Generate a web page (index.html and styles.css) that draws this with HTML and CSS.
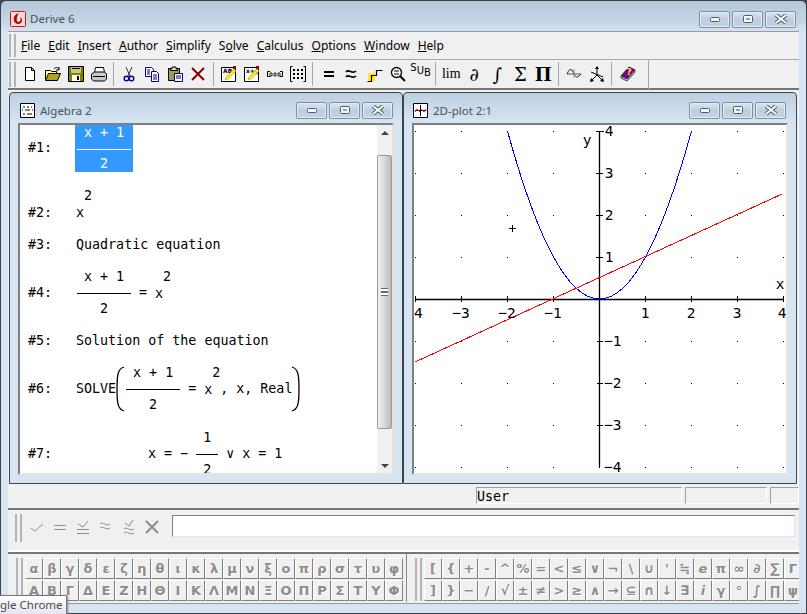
FILE: index.html
```html
<!doctype html>
<html lang="en">
<head>
<meta charset="utf-8">
<title>Derive 6</title>
<link rel="stylesheet" href="styles.css">
</head>
<body>

<svg class="sprites" width="0" height="0">
	<symbol id="capMin" viewBox="0 0 12 8"><rect x="1.5" y="2.5" width="9" height="4" rx="1" fill="#f4f7fa" stroke="#4e5d6e"/></symbol>
	<symbol id="capMax" viewBox="0 0 12 8"><rect x="1.5" y="0.5" width="9" height="7" rx="1" fill="#f4f7fa" stroke="#4e5d6e"/><rect x="4" y="3" width="4" height="2" fill="#8ea2b6"/></symbol>
	<symbol id="capClose" viewBox="0 0 14 10"><path d="M2 1l10 8M12 1L2 9" stroke="#4e5d6e" stroke-width="4"/><path d="M2 1l10 8M12 1L2 9" stroke="#fff" stroke-width="2"/></symbol>
</svg>

<div class="frame">

	<div class="titlebar">
		<svg class="appicon" width="16" height="16" viewBox="0 0 16 16"><rect x="0.5" y="0.5" width="15" height="15" rx="1" fill="#f4dcdc" stroke="#e01010"/><path d="M9 2c-4 1-6 4-5 8 1 3 5 4 7 2 2-2 1-5-1-6 1 2 1 4-1 5-2 0-3-2-2-4 0-2 1-4 2-5z" fill="#a80c0c"/></svg>
		<span class="titletext">Derive 6</span>
		<div class="caps">
			<span class="cap"><svg width="12" height="8"><use href="#capMin"/></svg></span>
			<span class="cap"><svg width="12" height="8"><use href="#capMax"/></svg></span>
			<span class="cap"><svg width="14" height="10"><use href="#capClose"/></svg></span>
		</div>
	</div>

	<div class="client">

		<div class="menubar">
			<i class="grip"></i>
			<span><u>F</u>ile</span>
			<span><u>E</u>dit</span>
			<span><u>I</u>nsert</span>
			<span><u>A</u>uthor</span>
			<span><u>S</u>implify</span>
			<span>S<u>o</u>lve</span>
			<span><u>C</u>alculus</span>
			<span><u>O</u>ptions</span>
			<span><u>W</u>indow</span>
			<span><u>H</u>elp</span>
		</div>

		<div class="toolbar">
			<i class="grip"></i>
			<span class="tool"><svg width="16" height="16"><path d="M3.5 1.5h6l3 3v10h-9zM9.5 1.5v3h3" fill="#fff" stroke="#000"/></svg></span>
			<span class="tool"><svg width="16" height="16"><path d="M.5 13.5v-9h5l1 1h5v2" fill="#ffff9c" stroke="#000"/><path d="M.5 14.5l3-7h12l-3 7z" fill="#b8a020" stroke="#000"/><path d="M9 3c1-2 4-2 5 0M14 1v3h-3" fill="none" stroke="#000"/></svg></span>
			<span class="tool"><svg width="16" height="16"><path d="M.5.5h15v15H.5z" fill="#808000" stroke="#000"/><rect x="3" y="1" width="10" height="6" fill="#c8c880"/><rect x="4" y="2" width="8" height="1" fill="#000"/><rect x="4" y="9" width="8" height="6" fill="#fff"/><rect x="9" y="10" width="2" height="4" fill="#000"/></svg></span>
			<span class="tool"><svg width="16" height="16"><path d="M4.5 1.5h8l1 5h-10z" fill="#fff" stroke="#000"/><path d="M.5 8l3-2h10l2 2v5l-2 2H2.5L.5 13z" fill="#c8c8c8" stroke="#000"/><path d="M2 10.500h12" stroke="#000"/><rect x="10" y="8" width="3" height="1" fill="#ff0"/></svg></span>
			<i class="sep"></i>
			<span class="tool"><svg width="16" height="16"><path d="M5 1l4 9M11 1L7 10" stroke="#333" fill="none"/><circle cx="5.500" cy="12.500" r="2.300" fill="none" stroke="#0000a0" stroke-width="1.400"/><circle cx="10.500" cy="12.500" r="2.300" fill="none" stroke="#0000a0" stroke-width="1.400"/></svg></span>
			<span class="tool"><svg width="16" height="16"><path d="M1.500 1.500h6l2 2v7h-8z" fill="#fff" stroke="#000080"/><path d="M7.500 5.500h5l2 2v8h-7z" fill="#fff" stroke="#000080"/><path d="M3 4h3M3 6h3M3 8h3M9 9h4M9 11h4M9 13h4" stroke="#000080"/></svg></span>
			<span class="tool"><svg width="16" height="16"><path d="M1.500 2.500h11v12h-11z" fill="#a09858" stroke="#000"/><path d="M5 2.500V1h4v1.500l1.500 1v1h-7v-1z" fill="#e0d890" stroke="#000"/><path d="M7.500 7.500h8v8h-8z" fill="#fff" stroke="#000080"/><path d="M9 10h5M9 12h5" stroke="#000080"/></svg></span>
			<span class="tool"><svg width="16" height="16"><path d="M2 2l12 12M14 2L2 14" stroke="#800000" stroke-width="2"/></svg></span>
			<i class="sep"></i>
			<span class="tool"><svg width="16" height="16"><path d="M.5 1.500h14v14H.5z" fill="#fff" stroke="#000"/><text class="icontext" x="2" y="7">AB</text><path d="M4 14l1-3 8-8 2 2-8 8z" fill="#ffe820" stroke="#a09000" stroke-width=".5"/><rect x="12" y="0" width="3" height="3" fill="#a00020"/></svg></span>
			<span class="tool"><svg width="16" height="16"><path d="M.5 1.500h14v14H.5z" fill="#fff" stroke="#000"/><text class="icontext" x="2" y="7">x+y</text><path d="M4 14l1-3 8-8 2 2-8 8z" fill="#ffe820" stroke="#a09000" stroke-width=".5"/><rect x="12" y="0" width="3" height="3" fill="#a00020"/></svg></span>
			<span class="tool"><svg width="16" height="16"><path d="M3 5.500H.5v5H3M13 5.500h2.500v5H13" fill="none" stroke="#000"/><path d="M3 7h2v3H3zM7 7h2v3H7zM11 7h2v3h-2z" fill="none" stroke="#000" stroke-width=".8"/></svg></span>
			<span class="tool"><svg width="16" height="16"><path d="M2.500.5H.5v15h2M13.500.5h2v15h-2" fill="none" stroke="#000"/><path d="M3 3h2v2H3zM7 3h2v2H7zM11 3h2v2h-2zM3 7h2v2H3zM7 7h2v2H7zM11 7h2v2h-2zM3 11h2v2H3zM7 11h2v2H7zM11 11h2v2h-2z"/></svg></span>
			<i class="sep"></i>
			<span class="tool"><svg width="16" height="16"><path d="M3 5h10v2H3zM3 9h10v2H3z"/></svg></span>
			<span class="tool"><svg width="16" height="16"><path d="M2 6c3-4 6 3 10-1M2 11c3-4 6 3 10-1" fill="none" stroke="#000" stroke-width="1.600"/></svg></span>
			<span class="tool"><svg width="16" height="16"><rect x="1" y="7" width="7" height="8" fill="#ffe820"/><path d="M.5 15.500h4v-6h5v-5h6" fill="none" stroke="#000" stroke-width="1.200"/></svg></span>
			<span class="tool"><svg width="16" height="16"><circle cx="6.500" cy="6.500" r="5" fill="#fff" stroke="#000" stroke-width="1.300"/><path d="M4 5h5M4 8h5" stroke="#000"/><path d="M10 10l5 5" stroke="#000" stroke-width="2"/></svg></span>
			<span class="tool tool-sub"><span>S</span><span>U</span><span>B</span></span>
			<i class="sep"></i>
			<span class="tool tool-lim">lim</span>
			<span class="tool tool-op">∂</span>
			<span class="tool tool-op">∫</span>
			<span class="tool tool-op">Σ</span>
			<span class="tool tool-op tool-heavy">Π</span>
			<i class="sep"></i>
			<span class="tool"><svg width="16" height="16"><path d="M1 8h14" stroke="#555"/><path d="M1 8c3-7 5-5 7 0s4 3 7 0" fill="none" stroke="#222"/><path d="M8 3v9" stroke="#999"/></svg></span>
			<span class="tool"><svg width="16" height="16"><path d="M8 1v8M8 9l-6 6M8 9l6 6M2 6l12 5" stroke="#000" fill="none"/><path d="M8 0l-2 3h4zM1 16l1-4 3 3zM15 16l-1-4-3 3z"/></svg></span>
			<i class="sep"></i>
			<span class="tool"><svg width="16" height="16"><path d="M1 10L9 1l6 3-8 9z" fill="#800090" stroke="#300040"/><path d="M1 10v2l6 3 8-9V4l-8 9z" fill="#c8c8c8" stroke="#444"/><text class="iconq" x="6.500" y="9">?</text></svg></span>
			<i class="sep sep-end"></i>
		</div>

		<div class="mdi">

			<section class="child">
				<div class="childtitle">
					<svg class="childicon" width="15" height="15"><path d="M.5.5h14v14H.5z" fill="#fff" stroke="#000"/><path d="M3 4h2M7 4h2M11 4h1M2 7h1M5 7h5M12 7h1M3 11h2M7 11h5" stroke="#000"/></svg>
					<span class="titletext">Algebra 2</span>
					<div class="caps">
						<span class="cap"><svg width="12" height="8"><use href="#capMin"/></svg></span>
						<span class="cap"><svg width="12" height="8"><use href="#capMax"/></svg></span>
						<span class="cap"><svg width="14" height="10"><use href="#capClose"/></svg></span>
					</div>
				</div>
				<div class="pane pane-algebra">
					<div class="sheet">
						<div class="row row-first"><span class="num">#1:</span><span class="frac frac-sel"><span>x + 1</span><i></i><span>2</span></span></div>
						<div class="row row-pow"><span class="num">#2:</span><span class="pow"><span class="sup">2</span><span>x</span></span></div>
						<div class="row"><span class="num">#3:</span><span>Quadratic equation</span></div>
						<div class="row"><span class="num">#4:</span><span class="frac"><span>x + 1</span><i></i><span>2</span></span><span> = </span><span class="pow pow-mid"><span class="sup">2</span><span>x</span></span></div>
						<div class="row"><span class="num">#5:</span><span>Solution of the equation</span></div>
						<div class="row"><span class="num">#6:</span><span>SOLVE</span><svg class="paren" width="9" height="46" viewBox="0 0 9 46"><path d="M8 1C2 3 1 8 1 23s1 20 7 22" fill="none" stroke="#000" stroke-width="1.300"/></svg><span class="frac"><span>x + 1</span><i></i><span>2</span></span><span> = </span><span class="pow pow-mid"><span class="sup">2</span><span>x</span></span><span>, x, Real</span><svg class="paren paren-r" width="9" height="46" viewBox="0 0 9 46"><path d="M1 1c6 2 7 7 7 22s-1 20-7 22" fill="none" stroke="#000" stroke-width="1.300"/></svg></div>
						<div class="row row-last"><span class="num">#7:</span><span class="indent">x = − </span><span class="frac frac-small"><span>1</span><i></i><span>2</span></span><span> ∨ x = 1</span></div>
					</div>
					<div class="scrollbar">
						<span class="arrow-up"></span>
						<div class="thumb"><i></i></div>
						<span class="arrow-down"></span>
					</div>
				</div>
			</section>

			<section class="child child-plot">
				<div class="childtitle">
					<svg class="childicon" width="15" height="15"><path d="M.5.5h14v14H.5z" fill="#fff" stroke="#000"/><path d="M7.500 2v11M2 7.500h11" stroke="#000"/><path d="M2 9l2-3 3 3M8 6l3 3 2-3" fill="none" stroke="#e02020"/></svg>
					<span class="titletext">2D-plot 2:1</span>
					<div class="caps">
						<span class="cap"><svg width="12" height="8"><use href="#capMin"/></svg></span>
						<span class="cap"><svg width="12" height="8"><use href="#capMax"/></svg></span>
						<span class="cap"><svg width="14" height="10"><use href="#capClose"/></svg></span>
					</div>
				</div>
				<div class="pane">
					<svg class="plot" width="372" height="349" viewBox="414 125 372 349">
						<path class="dots" d="M415 131.500H785M415 173.500H785M415 215.500H785M415 257.500H785M415 341.500H785M415 383.500H785M415 425.500H785M415 467.500H785"/>
						<path class="axis axis-main" d="M415 299.500H784M599.500 131V467"/>
						<path class="axis" d="M415.500 296v6M461.500 296v6M507.500 296v6M553.500 296v6M645.500 296v6M691.500 296v6M737.500 296v6M783.500 296v6M596 131.500h8M596 173.500h7M596 215.500h7M596 257.500h7M597 341.500h6M597 383.500h6M597 425.500h6"/>
						<path class="curve-blue" d="M507.500 131Q599.500 467 691.500 131"/>
						<path class="curve-red" d="M415 362L782 194"/>
						<path class="axis" d="M509 228.500h7M512.500 225v7"/>
						<g class="ticks">
							<text x="609" y="136" text-anchor="middle">4</text>
							<text x="609" y="178" text-anchor="middle">3</text>
							<text x="609" y="220" text-anchor="middle">2</text>
							<text x="609" y="262" text-anchor="middle">1</text>
							<text x="604" y="346">−1</text>
							<text x="604" y="388">−2</text>
							<text x="604" y="430">−3</text>
							<text x="604" y="472">−4</text>
							<text x="414" y="318" text-anchor="middle">−4</text>
							<text x="461" y="318" text-anchor="middle">−3</text>
							<text x="507" y="318" text-anchor="middle">−2</text>
							<text x="553" y="318" text-anchor="middle">−1</text>
							<text x="645" y="318" text-anchor="middle">1</text>
							<text x="691" y="318" text-anchor="middle">2</text>
							<text x="737" y="318" text-anchor="middle">3</text>
							<text x="782" y="318" text-anchor="middle">4</text>
							<text x="587" y="145" text-anchor="middle">y</text>
							<text x="780" y="289" text-anchor="middle">x</text>
						</g>
					</svg>
				</div>
			</section>

		</div>

		<div class="statusbar">
			<span class="panel panel-user">User</span>
			<span class="panel panel-mid"></span>
			<span class="panel panel-end"></span>
		</div>

		<div class="entrybar">
			<i class="grip"></i>
			<span class="tool"><svg width="16" height="16"><path d="M2 9l4 3 8-7" class="off"/></svg></span>
			<span class="tool"><svg width="16" height="16"><path d="M2 6.500h12M2 10.500h12" class="off"/></svg></span>
			<span class="tool"><svg width="16" height="16"><path d="M3 5l5 3 5-6M2 10.500h12M2 14.500h12" class="off"/></svg></span>
			<span class="tool"><svg width="16" height="16"><path d="M2 5c3-3 6 3 10 0M2 9c3-3 6 3 10 0" class="off"/></svg></span>
			<span class="tool"><svg width="16" height="16"><path d="M4 4l4 3 4-6M3 10c3-3 6 3 10 0M3 14c3-3 6 3 10 0" class="off"/></svg></span>
			<span class="tool"><svg width="16" height="16"><path d="M2 2l12 12M14 2L2 14" class="off off-x"/></svg></span>
			<div class="entry"></div>
		</div>

		<div class="symbolbar">
			<i class="grip"></i>
			<div class="keys">
				<span>α</span><span>β</span><span>γ</span><span>δ</span><span>ε</span><span>ζ</span><span>η</span><span>θ</span><span>ι</span><span>κ</span><span>λ</span><span>μ</span><span>ν</span><span>ξ</span><span>ο</span><span>π</span><span>ρ</span><span>σ</span><span>τ</span><span>υ</span><span>φ</span>
				<span>Α</span><span>Β</span><span>Γ</span><span>Δ</span><span>Ε</span><span>Ζ</span><span>Η</span><span>Θ</span><span>Ι</span><span>Κ</span><span>Λ</span><span>Μ</span><span>Ν</span><span>Ξ</span><span>Ο</span><span>Π</span><span>Ρ</span><span>Σ</span><span>Τ</span><span>Υ</span><span>Φ</span>
			</div>
			<i class="sep sep-keys"></i>
			<i class="grip"></i>
			<div class="keys">
				<span>[</span><span>{</span><span>+</span><span>-</span><span>^</span><span>%</span><span>=</span><span>&lt;</span><span>≤</span><span>∨</span><span>¬</span><span>\</span><span>∪</span><span>'</span><span>≒</span><span><em>e</em></span><span>π</span><span>∞</span><span>∂</span><span>∑</span><span>Γ</span>
				<span>]</span><span>}</span><span>−</span><span>/</span><span>√</span><span>±</span><span>≠</span><span>&gt;</span><span>≥</span><span>∧</span><span>→</span><span>⊆</span><span>∩</span><span>↓</span><span>∃</span><span><em>i</em></span><span>γ</span><span>°</span><span>∫</span><span>∏</span><span>ψ</span>
			</div>
		</div>

	</div>
</div>

<div class="tooltip">gle Chrome</div>

</body>
</html>
```

FILE: styles.css
```css
html, body { margin: 0; height: 100%; }
body { width: 807px; height: 614px; overflow: hidden; position: relative; background: #444; font: 12px "Noto Sans", sans-serif; color: #000; }

.sprites { position: absolute; }

.frame { height: 100%; box-sizing: border-box; display: flex; flex-direction: column; border: 1px solid #3c4148; border-radius: 6px 6px 0 0; padding: 0 7px 9px; background: linear-gradient(#b4c8db 0, #c4d5e5 20px, #d7e5f3 32px); }

/* title bars */
.titlebar { height: 30px; flex: none; display: flex; align-items: center; margin: 0 -7px; padding: 0 10px 0 9px; box-sizing: border-box; }
.appicon { margin: 6px 4px 0 0; }
.titletext { font-size: 11.5px; color: #47525e; margin-top: 5px; }
.caps { margin-left: auto; display: flex; gap: 2px; margin-top: 6px; }
.cap { width: 31px; height: 17px; box-sizing: border-box; display: flex; align-items: center; justify-content: center; border: 1px solid #7d90a6; border-radius: 2px; background: linear-gradient(#dde6ef, #bccde0 50%, #c4d4e4); box-shadow: inset 0 0 0 1px #e3ebf3; }

.client { flex: 1; display: flex; flex-direction: column; background: #f0f0f0; min-height: 0; }

.grip { flex: none; width: 7px; border-left: 2px solid #b4b4b4; border-right: 2px solid #b4b4b4; box-sizing: border-box; margin: 0 3px 0 1px; }

/* menu and tool bars */
.menubar { height: 29px; flex: none; box-sizing: border-box; border-top: 1px solid #9c9c9c; border-bottom: 1px solid #a8a8a8; display: flex; align-items: center; }
.menubar .grip { align-self: stretch; margin: 2px 5px 2px 1px; }
.menubar span { margin-right: 8px; line-height: 26px; }
.toolbar { height: 30px; flex: none; box-sizing: border-box; display: flex; align-items: center; border-bottom: 2px solid #777; }
.toolbar .grip { align-self: stretch; margin: 2px 2px 1px 1px; }

.tool { width: 23px; height: 24px; flex: none; display: flex; align-items: center; justify-content: center; }
.sep { flex: none; width: 1px; height: 24px; margin: 0 3.7px 0 3px; background: #a8a8a8; }
.sep-end { height: 30px; margin-left: 9px; }
.icontext { font: bold 6px "DejaVu Sans", sans-serif; }
.iconq { font: bold 9px "DejaVu Sans", sans-serif; fill: #ffe820; }
.tool-sub { font: 10px "DejaVu Sans", sans-serif; gap: 0; align-items: flex-start; }
.tool-sub span:nth-child(2) { margin-top: 3px; }
.tool-sub span:nth-child(3) { margin-top: 5px; }
.tool-lim { font: 14px "Liberation Serif", serif; }
.tool-op { font: 18px "DejaVu Serif", serif; }
.tool-heavy { font-weight: bold; }

/* child windows */
.mdi { flex: 1; display: flex; min-height: 0; padding: 2px 1px 1px; }
.child { width: 394px; box-sizing: border-box; display: flex; flex-direction: column; border: 1px solid #3f444b; border-radius: 4px 4px 0 0; padding: 0 8px 8px; background: linear-gradient(#bccfe1 0, #d7e5f3 30px); }
.childtitle { height: 30px; flex: none; box-sizing: border-box; padding-top: 4px; display: flex; align-items: center; }
.childtitle .caps { margin-top: 0; margin-right: 1px; }
.child-plot .childtitle .caps { margin-right: 2px; }
.childtitle .titletext { margin-top: 0; }
.childicon { margin: 0 5px 0 2px; }
.child-plot .childicon { margin-left: 1px; }
.pane { flex: 1; display: flex; min-height: 0; box-sizing: border-box; background: #fff; border: 2px solid; border-color: #808080 #e3e3e3 #e3e3e3 #808080; overflow: hidden; }

/* algebra window */
.sheet { flex: 1; overflow: hidden; padding-left: 8px; font: 13.33px/16px "DejaVu Sans Mono", monospace; }
.row { display: flex; align-items: center; margin-top: 16px; }
.row span { white-space: pre; }
.row-first { margin-top: -1px; }
.row-pow { align-items: flex-end; }
.row-last { margin-top: 17px; }
.num { width: 48px; flex: none; }
.frac { display: inline-flex; flex-direction: column; align-items: center; width: 54px; margin-left: 1px; }
.frac span { height: 16px; }
.frac i { display: block; align-self: stretch; height: 1px; background: #000; margin: 8px 0 7px; }
.frac-sel { background: #3399ff; color: #fff; padding: 1px 2px 0; margin-left: -1px; }
.frac-sel i { background: #fff; margin-bottom: 6px; }
.frac-small { width: 22px; margin-left: 0; }
.pow { display: flex; flex-direction: column; width: 16px; }
.pow .sup { padding-left: 8px; margin-bottom: 1px; }
.pow-mid { padding-bottom: 15px; }
.paren { flex: none; }
.paren-r { margin-left: -1px; }
.indent { margin-left: 72px; }

.scrollbar { width: 15px; flex: none; display: flex; flex-direction: column; align-items: center; background: #f0f0f0; }
.arrow-up, .arrow-down { flex: none; width: 0; height: 0; border: 4px solid transparent; }
.arrow-up { border-bottom-color: #444; border-top-width: 0; margin: 6px 0 20px; }
.arrow-down { border-top-color: #444; border-bottom-width: 0; margin-top: auto; margin-bottom: 5px; }
.thumb { width: 100%; height: 274px; flex: none; box-sizing: border-box; border: 1px solid #989898; border-radius: 2px; background: linear-gradient(90deg, #f0f0f0, #d8d8d8 50%, #bcbcbc); display: flex; align-items: center; justify-content: center; }
.thumb i { width: 7px; height: 6px; border-top: 1px solid #666; border-bottom: 1px solid #666; background: linear-gradient(#fff 40%, #666 40%, #666 60%, #fff 60%); }

/* plot */
.plot { display: block; flex: none; }
.dots { fill: none; stroke: #000; stroke-dasharray: 1 45; }
.axis { fill: none; stroke: #000; }
.axis-main { stroke-width: 1.3; }
.curve-blue { fill: none; stroke: #0000ff; shape-rendering: crispEdges; }
.curve-red { fill: none; stroke: #ff0000; shape-rendering: crispEdges; }
.ticks { font: 14.5px "DejaVu Sans Mono", monospace; }

/* status */
.statusbar { height: 25px; flex: none; box-sizing: border-box; display: flex; justify-content: flex-end; gap: 3px; padding: 2px 0 4px; border-bottom: 2px solid #777; }
.panel { box-sizing: border-box; border: 1px solid; border-color: #a0a0a0 #fff #fff #a0a0a0; }
.panel-user { width: 206px; font: 13.33px/17px "DejaVu Sans Mono", monospace; }
.panel-mid { width: 82px; }
.panel-end { width: 29px; }

/* entry line */
.entrybar { height: 42px; flex: none; box-sizing: border-box; display: flex; align-items: center; padding-top: 2px; border-bottom: 2px solid #fff; }
.entrybar .grip { align-self: stretch; margin: 2px 3px 8px 7px; }
.entrybar .tool { margin-bottom: 8px; }
.entry { width: 623px; height: 22px; flex: none; box-sizing: border-box; margin: 0 0 10px 9px; background: #fff; border: 1px solid; border-color: #808080 #e3e3e3 #e3e3e3 #808080; }
.off { fill: none; stroke: #8c8c8c; }
.off-x { stroke-width: 2; }

/* symbol bars */
.symbolbar { height: 52px; flex: none; box-sizing: border-box; display: flex; overflow: hidden; border-top: 2px solid #777; border-bottom: 1px solid #999; padding-top: 4px; }
.symbolbar .grip { margin: 0 2px 2px 8px; }
.keys { flex: none; display: grid; grid-template-columns: repeat(21, 18px); grid-auto-rows: 21px; gap: 1px 0; }
.keys span { box-sizing: border-box; display: flex; align-items: center; justify-content: center; border: 1px solid; border-color: #fff #808080 #808080 #fff; font: bold 13px "DejaVu Sans", sans-serif; color: #8c8c8c; text-shadow: 1px 1px 0 #fff; }
.sep-keys { height: 48px; margin: -4px 0 0 3px; width: 1px; background: #888; }

.tooltip { position: absolute; left: 0; bottom: 0; width: 67px; height: 19px; box-sizing: border-box; padding-right: 5px; text-align: right; white-space: nowrap; font-size: 11.5px; line-height: 17px; color: #4c4c4c; border: 1px solid #767676; border-left: none; border-bottom: none; background: linear-gradient(#fff, #e4e5f0); box-shadow: 1px 1px 2px #888; }
```
